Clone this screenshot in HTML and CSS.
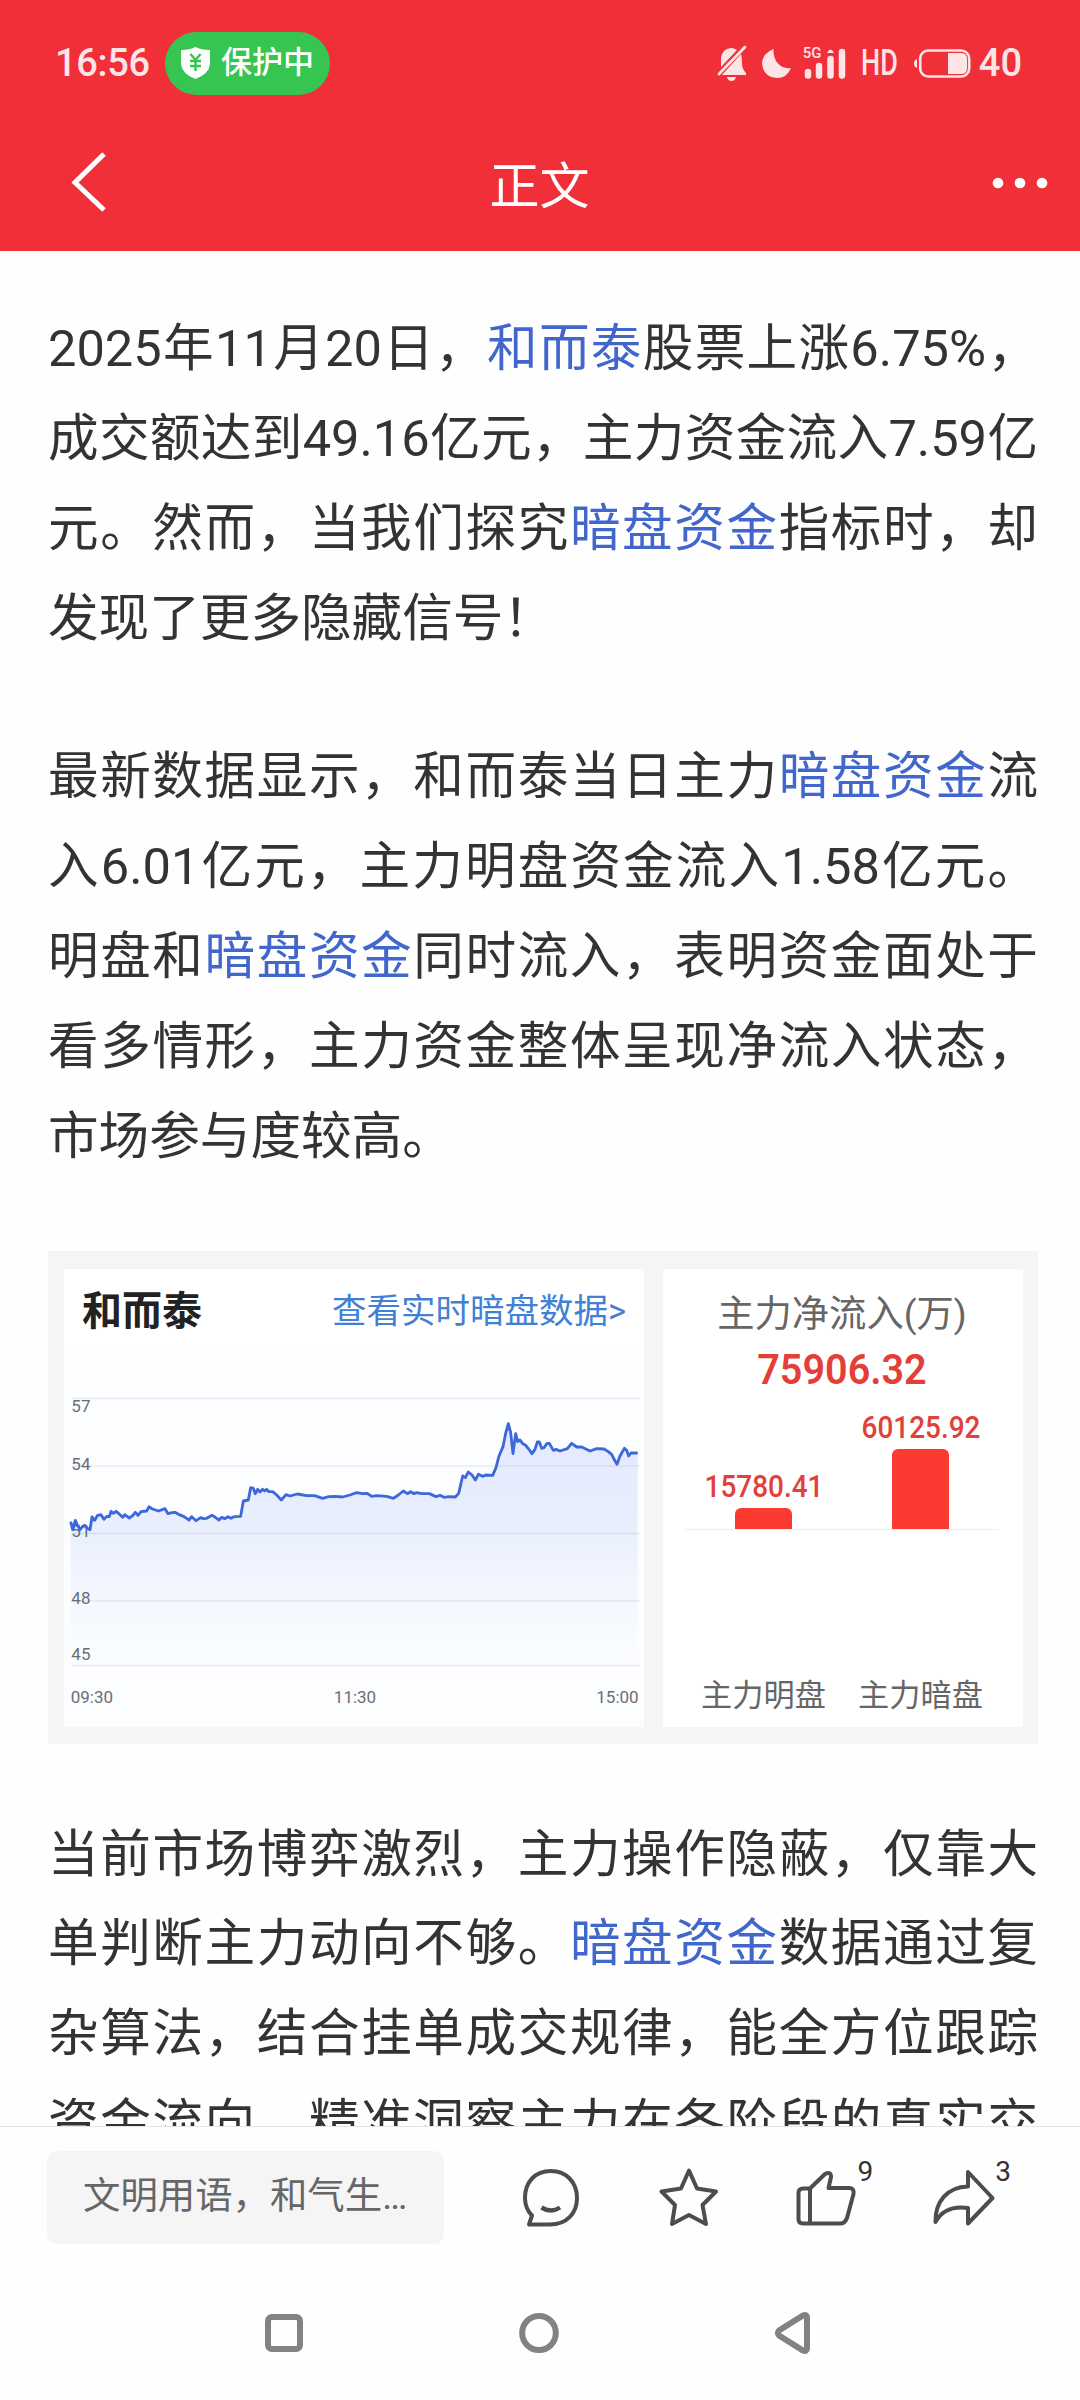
FILE: index.html
```
<!DOCTYPE html>
<html lang="zh-CN">

<head>
    <meta charset="UTF-8">
    <meta name="viewport" content="width=device-width, initial-scale=1.0">
    <title>正文</title>
    <link rel="stylesheet" href="styles.css">
</head>

<body>
    <header class="header">
        <div class="status">
            <span class="time">16:56</span>
            <div class="protect">
                <svg width="29" height="32" viewBox="0 0 29 32">
                    <path fill="#fff" d="M14.500 0Q20 3 29 3V17Q28 27 14.500 32Q1 27 0 17V3Q9 3 14.500 0Z" />
                    <path fill="none" stroke="#36c550" stroke-width="2.400" d="M9.500 7L14.500 13L19.500 7M14.500 12V24M9 14H20M9 19H20" />
                </svg>
                <span>保护中</span>
            </div>
            <div class="status-icons">
                <svg class="i-bell" width="30" height="36" viewBox="0 0 30 36">
                    <path fill="#fde4e6" d="M4 20V13Q5 4 14 3Q17 3 20 5L4 22ZM24 9Q25 12 25 18Q25 24 29 28V30H5ZM10 32H19Q18 36 14.500 36Q11 36 10 32Z" />
                    <path stroke="#fde4e6" stroke-width="2.800" stroke-linecap="round" d="M2 29L28 2" />
                </svg>
                <svg class="i-moon" width="29" height="29" viewBox="0 0 29 29">
                    <path fill="#fde4e6" d="M11.500 0Q11 9 16 14.500Q21 20 29 19Q25 29 15 29Q1 28 0 14Q1 4 11.500 0Z" />
                </svg>
                <div class="signal">
                    <svg width="42" height="31" viewBox="0 0 42 31">
                        <g stroke="#fde4e6" stroke-width="6.500" stroke-linecap="round">
                            <path d="M4 24V27.500M15 18V27.500M26.500 11V27.500M38 4V27.500" />
                        </g>
                        <path fill="#fde4e6" d="M23 5Q26.500 -2 30 5Z" />
                    </svg>
                    <span>5G</span>
                </div>
                <span class="hd">HD</span>
                <svg class="i-battery" width="57" height="29" viewBox="0 0 57 29">
                    <rect x="6.200" y="1.500" width="49" height="26" rx="8" fill="none" stroke="#fde4e6" stroke-width="2.600" />
                    <path fill="#fde4e6" d="M34 4H47Q53 4 53 10V19Q53 25 47 25H34ZM3 10V19Q0 18 0 14.500Q0 11 3 10Z" />
                </svg>
                <span class="battery">40</span>
            </div>
        </div>
        <nav class="nav">
            <svg class="back" width="36" height="60" viewBox="0 0 36 60">
                <path fill="none" stroke="#fff" stroke-width="5" d="M33 2L4 30.500L33 58" />
            </svg>
            <h1>正文</h1>
            <svg class="more" width="56" height="12" viewBox="0 0 56 12">
                <g fill="#fff">
                    <circle cx="6" cy="6" r="5.300" />
                    <circle cx="28" cy="6" r="5.300" />
                    <circle cx="50" cy="6" r="5.300" />
                </g>
            </svg>
        </nav>
    </header>

    <main class="article">
        <p>2025年11月20日，<a>和而泰</a>股票上涨6.75%，成交额达到49.16亿元，主力资金流入7.59亿元。然而，当我们探究<a>暗盘资金</a>指标时，却发现了更多隐藏信号！</p>
        <p>最新数据显示，和而泰当日主力<a>暗盘资金</a>流入6.01亿元，主力明盘资金流入1.58亿元。明盘和<a>暗盘资金</a>同时流入，表明资金面处于看多情形，主力资金整体呈现净流入状态，市场参与度较高。</p>

        <div class="card">
            <section class="trend">
                <div class="trend-head">
                    <h2>和而泰</h2>
                    <a>查看实时暗盘数据&gt;</a>
                </div>
                <svg class="trend-chart" viewBox="72 330 1740 1128">
                    <defs>
                        <linearGradient id="area" x1="0" y1="548" x2="0" y2="1274" gradientUnits="userSpaceOnUse">
                            <stop offset="0" stop-color="#4a72f0" stop-opacity=".14" />
                            <stop offset=".45" stop-color="#4a72f0" stop-opacity=".1" />
                            <stop offset="1" stop-color="#4ab0f0" stop-opacity="0" />
                        </linearGradient>
                    </defs>
                    <g class="grid">
                        <path d="M96 472H1799M96 675H1799M96 877H1799M96 1080H1799M96 1274H1799" />
                    </g>
                    <g class="axis">
                        <text x="94" y="514">57</text>
                        <text x="94" y="688">54</text>
                        <text x="94" y="889">51</text>
                        <text x="94" y="1090">48</text>
                        <text x="94" y="1258">45</text>
                        <text x="92" y="1386">09:30</text>
                        <text x="945" y="1386" text-anchor="middle">11:30</text>
                        <text x="1796" y="1386" text-anchor="end">15:00</text>
                    </g>
                    <path id="fill" fill="url(#area)" />
                    <polyline id="line" class="line" points="92,842 98,866 106,838 112,852 120,866 128,856 135,853 142,862 150,866 156,828 164,838 172,824 183,821 192,835 200,826 208,827 213,811 220,817 228,811 240,821 248,829 254,821 268,831 278,824 286,814 294,823 303,812 320,810 327,797 337,804 356,810 375,803 384,818 396,815 405,814 418,821 432,827 447,837 455,827 468,839 482,830 490,833 500,832 516,823 526,829 537,837 545,829 554,833 564,827 573,832 582,827 602,826 610,780 625,777 632,740 640,742 646,758 653,745 660,753 668,745 674,750 680,745 686,752 698,752 710,762 724,777 738,761 750,765 772,759 800,764 824,764 848,772 866,767 885,766 908,768 930,762 950,755 968,758 982,757 995,766 1010,764 1040,766 1060,772 1075,762 1090,750 1102,758 1112,752 1122,758 1130,755 1145,758 1168,758 1188,767 1200,763 1212,769 1228,767 1246,768 1256,757 1268,705 1276,710 1285,693 1296,702 1306,717 1315,700 1328,706 1337,702 1358,703 1368,680 1377,645 1389,617 1397,577 1405,548 1412,575 1419,638 1427,578 1433,602 1440,597 1448,608 1456,612 1466,624 1476,638 1485,625 1492,603 1498,603 1505,622 1512,620 1520,608 1528,607 1540,628 1548,625 1560,630 1582,623 1595,607 1610,618 1625,618 1650,630 1670,623 1692,624 1705,632 1715,640 1724,658 1731,670 1740,645 1753,622 1760,628 1766,645 1773,636 1793,636" />
                </svg>
            </section>
            <section class="flow">
                <h3>主力净流入(万)</h3>
                <strong>75906.32</strong>
                <div class="bars">
                    <div class="bar">
                        <span>15780.41</span>
                        <i style="height: 21px"></i>
                    </div>
                    <div class="bar">
                        <span>60125.92</span>
                        <i style="height: 80px"></i>
                    </div>
                </div>
                <div class="bar-labels">
                    <span>主力明盘</span>
                    <span>主力暗盘</span>
                </div>
            </section>
        </div>

        <p class="last">当前市场博弈激烈，主力操作隐蔽，仅靠大单判断主力动向不够。<a>暗盘资金</a>数据通过复杂算法，结合挂单成交规律，能全方位跟踪资金流向，精准洞察主力在各阶段的真实交</p>
    </main>

    <footer>
        <div class="toolbar">
            <div class="comment">文明用语，和气生…</div>
            <div class="action">
                <svg width="64" height="64" viewBox="0 0 64 64">
                    <path d="M10 57.500H31C48 57.500 58 46 58 31C58 15 47 4 32 4C16 4 6 15 6 31C6 38 8.500 44 13 48.500Z" />
                    <path d="M22.500 40.500Q32 46.500 41 40.500" stroke-width="4.500" />
                </svg>
            </div>
            <div class="action">
                <svg width="64" height="64" viewBox="0 0 64 64">
                    <path d="M32 3.500L40 21.500L59 24.500L45.500 38L49 57L32 48L15 57L18 38L4.500 24.500L24 21.500Z" />
                </svg>
            </div>
            <div class="action">
                <svg width="64" height="64" viewBox="0 0 64 64">
                    <path d="M16 21.500H9Q4.500 21.500 4.500 26V52Q4.500 56.500 9 56.500H46Q51 56.500 53 51L59.500 27Q60.500 21 55 21H34.500L37 10Q37 4 31 7L16 21.500V56.500" />
                </svg>
                <sup>9</sup>
            </div>
            <div class="action">
                <svg width="64" height="64" viewBox="0 0 64 64">
                    <path d="M36 5L60.500 31L36 56.500V41C22 39 10 43 3.500 55C3 35 15 20 36 19.500Z" />
                </svg>
                <sup>3</sup>
            </div>
        </div>
        <div class="sysnav">
            <svg width="44" height="46" viewBox="0 0 44 46">
                <rect x="6" y="7" width="32" height="32" rx="4" />
            </svg>
            <svg width="44" height="46" viewBox="0 0 44 46">
                <ellipse cx="22" cy="23" rx="16.800" ry="17" />
            </svg>
            <svg width="44" height="46" viewBox="0 0 44 46">
                <path d="M7 20.500Q5 23 7 25.500L31 40.500Q35 42 35 38V8Q35 4 31 5.500Z" />
            </svg>
        </div>
    </footer>

    <script>
        // 用折线的点生成下方的渐变面积
        const points = document.querySelector('#line').getAttribute('points')
        document.querySelector('#fill').setAttribute('d', `M92,1274 L${points} L1793,1274Z`)
    </script>
</body>

</html>
```
FILE: styles.css
```
* {
    box-sizing: border-box;
    margin: 0;
    padding: 0;
}

body {
    display: flex;
    flex-direction: column;
    width: 1080px;
    height: 2400px;
    overflow: hidden;
    background-color: #fefefe;
    color: #333;
    font-family: Roboto, "Noto Sans CJK SC", sans-serif;
}

svg {
    display: block;
    flex-shrink: 0;
}

/* 顶部 */
.header {
    height: 251px;
    background-color: #f12f38;
    color: #fff;
}

.status {
    display: flex;
    align-items: center;
    height: 126px;
    padding: 0 58px 0 55px;
}

.time,
.battery {
    color: #fde4e6;
    font-size: 38px;
    font-weight: 500;
    line-height: 62px;
}

.time {
    width: 110px;
    letter-spacing: -.3px;
}

.protect {
    display: flex;
    align-items: center;
    gap: 11px;
    width: 165px;
    height: 63px;
    padding-left: 16px;
    border-radius: 32px;
    background-color: #36c550;
    font-size: 31px;
    font-weight: 500;
    line-height: 62px;
}

.status-icons {
    display: flex;
    align-items: center;
    margin-left: auto;
    color: #fde4e6;
}

.i-moon {
    margin-left: 15px;
}

.signal {
    position: relative;
    margin-left: 13px;
}

.signal span {
    position: absolute;
    left: -1px;
    top: -2px;
    font-size: 15px;
    font-weight: 500;
    line-height: 15px;
}

.hd {
    width: 38px;
    margin-left: 15px;
    font-size: 36px;
    font-weight: 500;
    transform: scaleX(.75);
    transform-origin: left;
}

.i-battery {
    margin-left: 15px;
}

.battery {
    margin-left: 8px;
}

.nav {
    display: flex;
    align-items: center;
    justify-content: space-between;
    height: 114px;
    padding: 0 32px 0 71px;
}

.nav h1 {
    margin-right: 20px;
    padding-bottom: 3px;
    font-size: 50px;
    font-weight: 400;
}

.nav .back {
    margin-bottom: 3px;
}

/* 正文 */
.article {
    flex: 1;
    min-height: 0;
    padding: 53px 42px 0 48px;
    overflow: hidden;
}

.article p {
    margin-bottom: 69px;
    font-size: 50.6px;
    line-height: 89.85px;
    text-align: justify;
}

.article p a {
    color: #4167cd;
}

.article .last {
    text-align-last: justify;
}

.card {
    display: flex;
    gap: 19px;
    height: 493px;
    margin: 0 0 66px;
    padding: 18px 15px 17px 16px;
    background-color: #f5f5f5;
}

.trend {
    width: 580px;
    background-color: #fff;
}

.trend-head {
    display: flex;
    align-items: center;
    justify-content: space-between;
    height: 82px;
    padding: 0 18px 3px 18px;
}

.trend-head h2 {
    color: #222;
    font-size: 40px;
    font-weight: 700;
}

.trend-head a {
    color: #4180d4;
    font-size: 34.5px;
}

.trend-chart {
    width: 580px;
    height: 376px;
    background-color: #fcfdff;
}

.grid {
    fill: none;
    stroke: #e9ebef;
    stroke-width: 5;
}

.axis {
    fill: #6a6d74;
    font-size: 51px;
}

.line {
    fill: none;
    stroke: #3d68dc;
    stroke-width: 8.5;
    stroke-linejoin: round;
}

.flow {
    display: flex;
    flex-direction: column;
    flex: 1;
    padding: 16px 24px 0 22px;
    background-color: #fff;
    text-align: center;
}

.flow h3 {
    color: #666;
    font-size: 37.3px;
    font-weight: 400;
    line-height: 58px;
}

.flow strong {
    color: #e53e38;
    font-size: 43px;
    font-weight: 600;
    line-height: 52px;
    transform: scaleX(.92);
}

.bars {
    display: flex;
    height: 135px;
    border-bottom: 1px solid #eee;
}

.bar {
    display: flex;
    flex: 1;
    flex-direction: column;
    align-items: center;
    justify-content: flex-end;
}

.bar span {
    color: #e2403b;
    font-size: 31px;
    font-weight: 500;
    line-height: 43px;
    transform: scaleX(.9);
}

.bar i {
    width: 57px;
    border-radius: 6px 6px 0 0;
    background-color: #fb3b32;
}

.bar-labels {
    display: flex;
    margin-top: 143px;
    color: #666;
    font-size: 31.2px;
    line-height: 46px;
}

.bar-labels span {
    flex: 1;
}

/* 底部 */
.toolbar {
    display: flex;
    align-items: center;
    height: 144px;
    padding: 0 47px;
    border-top: 1px solid #e4e4e4;
}

.comment {
    width: 398px;
    height: 93px;
    margin: 0 38px 2px 0;
    padding-left: 36px;
    border-radius: 10px;
    background-color: #f5f5f5;
    color: #666;
    font-size: 37.4px;
    line-height: 90px;
}

.action {
    position: relative;
    display: flex;
    justify-content: center;
    width: 138px;
}

.action svg {
    fill: none;
    stroke: #4d4d4d;
    stroke-width: 4;
    stroke-linejoin: round;
}

.action sup {
    position: absolute;
    left: 100px;
    top: -11px;
    color: #333;
    font-size: 28px;
    line-height: 32px;
}

.sysnav {
    display: flex;
    justify-content: space-between;
    height: 130px;
    padding: 40px 264px 0 262px;
}

.sysnav svg {
    fill: none;
    stroke: #828282;
    stroke-width: 6;
}
```
